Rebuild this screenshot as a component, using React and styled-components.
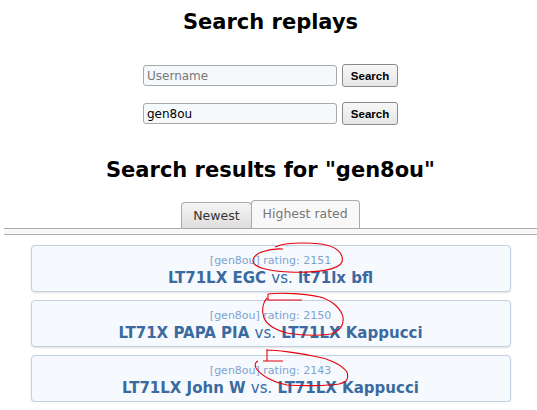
import styled, { createGlobalStyle } from "styled-components";

const GlobalStyle = createGlobalStyle`
  body {
    margin: 0;
    background: #fff;
    font-family: "DejaVu Sans", Verdana, sans-serif;
    color: #000;
  }
`;

const replays = [
  {
    format: "gen8ou",
    rating: 2151,
    p1: "LT71LX EGC",
    p2: "lt71lx bfl",
    mark: "M252 4 C238 3, 223 8, 222 15 C221 22, 236 26, 258 27 C285 28, 308 25, 311 17 C313 8, 305 1, 290 -1 C272 -3, 252 -2, 244 2",
  },
  {
    format: "gen8ou",
    rating: 2150,
    p1: "LT71X PAPA PIA",
    p2: "LT71LX Kappucci",
    mark: "M237 -6 L237 0 M236 0 L271 0 M237 -6 C250 -8, 275 -6, 289 -3 C300 0, 310 8, 312 17 C313 26, 309 31, 300 34 C285 36, 268 35, 256 33 C245 30, 236 25, 233 18 C230 10, 232 2, 236 -2",
  },
  {
    format: "gen8ou",
    rating: 2143,
    p1: "LT71LX John W",
    p2: "LT71LX Kappucci",
    mark: "M236 -6 L236 6 M232 6 L252 6 M236 -5 C245 -5, 268 -2, 282 1 C296 3, 310 9, 316 17 C318 24, 316 27, 308 29 C295 31, 270 31, 256 30 C244 28, 230 21, 225 13 C223 9, 225 7, 227 6",
  },
];

const App = () => {
  return (
    <>
      <GlobalStyle />
      <Page>
        <Title>Search replays</Title>
        <SearchForm>
          <SearchInput placeholder="Username" />
          <SearchButton>Search</SearchButton>
        </SearchForm>
        <SearchForm>
          <SearchInput defaultValue="gen8ou" />
          <SearchButton>Search</SearchButton>
        </SearchForm>
        <ResultsTitle>Search results for "gen8ou"</ResultsTitle>
        <Tabs>
          <Tab>Newest</Tab>
          <Tab active>Highest rated</Tab>
        </Tabs>
        <TabBarBottom />
        <List>
          {replays.map((replay) => (
            <ReplayLink key={replay.rating}>
              <Meta>
                [{replay.format}] rating: {replay.rating}
              </Meta>
              <Players>
                {replay.p1} <Vs>vs.</Vs> {replay.p2}
              </Players>
              <Scribble viewBox="0 0 480 47">
                <path d={replay.mark} />
              </Scribble>
            </ReplayLink>
          ))}
        </List>
      </Page>
    </>
  );
};

const Page = styled.div`
  padding-left: 4px;
  padding-top: 9px;
`;

const Title = styled.h1`
  margin: 0 0 29px;
  font-size: 21px;
  line-height: 26px;
  text-align: center;
  font-weight: bold;
`;

const SearchForm = styled.div`
  display: flex;
  justify-content: center;
  align-items: center;
  gap: 5px;
  margin-bottom: 15px;
`;

const SearchInput = styled.input`
  box-sizing: border-box;
  width: 194px;
  height: 21px;
  padding: 0 3px;
  border: 1px solid #a8a8a8;
  border-radius: 3px;
  background: #f5f9fc;
  font-family: "DejaVu Sans", Verdana, sans-serif;
  font-size: 12px;
  color: #000;
  outline: none;

  &::placeholder {
    color: #777;
  }
`;

const SearchButton = styled.button`
  box-sizing: border-box;
  width: 56px;
  height: 23px;
  padding: 0;
  border: 1px solid #8a8a8a;
  border-radius: 3px;
  background: linear-gradient(#f7f7f7, #e6e6e6);
  font-family: "Liberation Sans", Arial, sans-serif;
  font-size: 11.5px;
  font-weight: bold;
  color: #000;
`;

const ResultsTitle = styled.h2`
  margin: 32px 0 0;
  font-size: 21px;
  line-height: 26px;
  text-align: center;
  font-weight: bold;
`;

const Tabs = styled.div`
  display: flex;
  justify-content: center;
  align-items: flex-end;
  margin-top: 17px;
  border-bottom: 1px solid #a9a9a9;
`;

const Tab = styled.div`
  box-sizing: border-box;
  height: ${(props) => (props.active ? "28px" : "26px")};
  padding: 0 11px;
  border: 1px solid #aaa;
  border-bottom: 0;
  border-radius: 4px 4px 0 0;
  background: ${(props) =>
    props.active ? "#f8f8f8" : "linear-gradient(#f4f4f4, #dedede)"};
  color: ${(props) => (props.active ? "#777" : "#333")};
  font-size: 12.5px;
  line-height: ${(props) => (props.active ? "26px" : "25px")};
  margin-left: ${(props) => (props.active ? "-1px" : "0")};
`;

const TabBarBottom = styled.div`
  height: 5px;
  background: #f8f8f8;
  border-bottom: 1px solid #b0b0b0;
`;

const List = styled.div`
  display: flex;
  flex-direction: column;
  align-items: center;
  gap: 8px;
  padding-top: 10px;
`;

const ReplayLink = styled.a`
  position: relative;
  box-sizing: border-box;
  width: 480px;
  height: 47px;
  border: 1px solid #c2d1e2;
  border-radius: 4px;
  background: #f6f9fd;
  box-shadow: 0 1px 2px rgba(0, 0, 0, 0.12);
  text-align: center;
  color: #3a6aa0;
  text-decoration: none;
  padding-top: 8px;
`;

const Meta = styled.div`
  font-size: 11px;
  line-height: 14px;
  color: #7ea3d0;
`;

const Players = styled.div`
  font-size: 15px;
  line-height: 20px;
  font-weight: bold;
  color: #3a6aa0;
`;

const Vs = styled.span`
  font-weight: normal;
`;

const Scribble = styled.svg`
  position: absolute;
  left: -1px;
  top: -1px;
  width: 480px;
  height: 47px;
  overflow: visible;
  pointer-events: none;
  fill: none;
  stroke: #e8000b;
  stroke-width: 1.1;
`;

export default App;
